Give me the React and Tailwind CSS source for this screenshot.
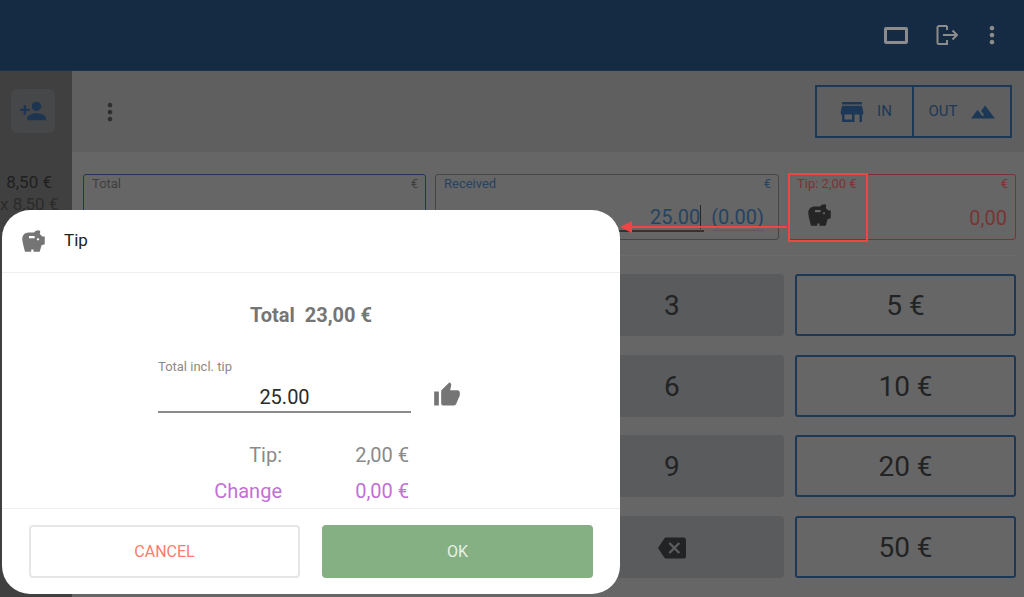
import React from 'react';
import { MdStore, MdTerrain, MdPersonAdd, MdMoreVert, MdSavings, MdThumbUp, MdBackspace } from 'react-icons/md';

const keys = [
  ['1', '2', '3', '5 €'],
  ['4', '5', '6', '10 €'],
  ['7', '8', '9', '20 €'],
  ['0', '.', 'back', '50 €'],
];

function Field({ label, className = '', labelClass = '', children }) {
  return (
    <div className={`relative h-[66px] rounded-[3px] border ${className}`}>
      <div className={`flex justify-between pl-2 pr-[7px] pt-[1px] text-[13px] leading-4 ${labelClass}`}>
        <span>{label}</span>
        <span>€</span>
      </div>
      {children}
    </div>
  );
}

function KeyRow({ row }) {
  return (
    <div className="flex h-[62px] gap-[11px]">
      <div className="grid flex-1 grid-cols-3 gap-[14px]">
        {row.slice(0, 3).map((k) => (
          <div key={k} className="flex items-center justify-center rounded-[4px] bg-[#5a5b5d] pt-[2px] text-[28px] text-[#222324]">
            {k === 'back' ? <MdBackspace size={28} /> : k}
          </div>
        ))}
      </div>
      <div className="flex w-[221px] items-center justify-center rounded-[3px] border-2 border-[#1d3856] pt-[2px] text-[28px] text-[#222324]">
        {row[3]}
      </div>
    </div>
  );
}

function TipDialog() {
  return (
    <div className="absolute left-[2px] top-[210px] flex h-[384px] w-[618px] flex-col rounded-[28px] bg-white">
      <div className="flex h-[63px] items-center gap-[17px] border-b border-[#efefef] pl-[18px]">
        <MdSavings size={27} className="text-[#757575]" />
        <span className="text-[17px] text-[#212121]">Tip</span>
      </div>
      <div className="flex-1">
        <div className="mt-[30px] text-center text-xl leading-6 font-bold text-[#757575]">Total&nbsp; 23,00 €</div>
        <div className="mt-[32px] flex items-end pl-[156px]">
          <div className="w-[253px] border-b-2 border-[#8a8a8a]">
            <div className="text-[13px] leading-4 text-[#8a8a8a]">Total incl. tip</div>
            <div className="mt-[7px] h-[29px] text-center text-xl leading-[30px] text-[#2b2b2b]">25.00</div>
          </div>
          <MdThumbUp size={28} className="mb-[4px] ml-[22px] text-[#757575]" />
        </div>
        <div className="mt-[28px] flex pl-[156px] text-xl leading-7 text-[#8a8a8a]">
          <span className="w-[124px] text-right">Tip:</span>
          <span className="w-[127px] text-right">2,00 €</span>
        </div>
        <div className="mt-[8px] flex pl-[156px] text-xl leading-7 text-[#c36fd6]">
          <span className="w-[124px] text-right">Change</span>
          <span className="w-[127px] text-right">0,00 €</span>
        </div>
      </div>
      <div className="flex h-[86px] gap-[22px] border-t border-[#efefef] px-[27px] pt-[16px]">
        <button className="h-[53px] w-[271px] rounded-[4px] border-2 border-[#e6e6e6] bg-white text-base text-[#ff7b6b]">CANCEL</button>
        <button className="h-[53px] w-[271px] rounded-[4px] bg-[#85b084] text-base text-[#e8f0e6]">OK</button>
      </div>
    </div>
  );
}

export default function App() {
  return (
    <div className="relative flex h-[597px] w-[1024px] flex-col overflow-hidden bg-[#666666] font-['Roboto',sans-serif]">
      <header className="flex h-[71px] shrink-0 items-center justify-end border-b border-[#1a3350] bg-[#152a43] pr-[20px] text-[#8c8c8c]">
        <div className="mr-[27px] h-[17px] w-[24px] rounded-[2px] border-[3px] border-[#8c8c8c]" />
        <svg width="24" height="24" viewBox="0 0 24 24" fill="none" stroke="currentColor" strokeWidth="2" className="mr-[19px]">
          <path d="M12 3H4a1.500 1.500 0 0 0-1.500 1.500v15A1.500 1.500 0 0 0 4 21h8v-4" />
          <path d="M12 3v4M8 12h14M17.500 7.500 22 12l-4.500 4.500" />
        </svg>
        <MdMoreVert size={28} className="-mr-[2px]" />
      </header>
      <div className="flex flex-1">
        <aside className="w-[72px] shrink-0 overflow-hidden bg-[#404040]">
          <div className="ml-[11px] mt-[18px] flex h-[44px] w-[44px] items-center justify-center rounded-[6px] bg-[#454749] text-[#1d3550]">
            <MdPersonAdd size={28} />
          </div>
          <div className="mt-[39px] whitespace-nowrap pr-[20px] text-right text-[17px] leading-5 text-[#1f1f1f]">8,50 €</div>
          <div className="mt-[2px] whitespace-nowrap pr-[20px] text-right text-[17px] leading-5 text-[#2b2b2b]">x 8,50 €</div>
        </aside>
        <main className="min-w-0 flex-1">
          <div className="flex h-[81px] items-center justify-between bg-[#5f5f5f] pl-[24px] pr-[12px]">
            <MdMoreVert size={28} className="text-[#2e2e2e]" />
            <div className="flex h-[53px] items-stretch text-[15px] text-[#1d3856]">
              <div className="flex w-[99px] items-center justify-center gap-[10px] border-2 border-[#1d3856]">
                <MdStore size={30} />
                <span>IN</span>
              </div>
              <div className="flex w-[98px] items-center justify-center gap-[12px] border-2 border-l-0 border-[#1d3856]">
                <span>OUT</span>
                <MdTerrain size={26} />
              </div>
            </div>
          </div>
          <div className="ml-[11px] mr-[8px] flex gap-[9px] border-b border-[#6b6b6b] pb-[15px] pt-[22px]">
            <Field label="Total" className="w-[343px] border-[#1d3856]" labelClass="text-[#3f3f3f]" />
            <Field label="Received" className="w-[344px] border-[#454545]" labelClass="text-[#254362]">
              <div className="absolute bottom-[10px] right-[14px] flex text-xl leading-6 text-[#254362]">
                <span className="border-r border-[#22272e]">25.00</span>
                <span className="ml-[10px]">(0.00)</span>
              </div>
              <div className="absolute bottom-[7px] left-[150px] h-[2px] w-[118px] bg-[#333333]" />
              <div className="absolute bottom-[8px] right-[14px] h-[1px] w-[51px] bg-[#5a5a5a]" />
            </Field>
            <Field label="Tip: 2,00 €" className="w-[228px] border-[#7a3434]" labelClass="text-[#7a3434]">
              <MdSavings size={27} className="absolute left-[17px] top-[27px] text-[#252525]" />
              <div className="absolute bottom-[9px] right-[8px] text-xl leading-6 text-[#7a3434]">0,00</div>
            </Field>
          </div>
          <div className="ml-[11px] mr-[8px] mt-[18px] flex flex-col gap-[18.500px]">
            {keys.map((row) => (
              <KeyRow key={row[3]} row={row} />
            ))}
          </div>
        </main>
      </div>

      {/* annotation over the tip field */}
      <div className="absolute left-[788px] top-[173px] h-[69px] w-[80px] border-2 border-[#f04545]" />
      <div className="absolute left-[630px] top-[226px] h-[2px] w-[157px] bg-[#f04545]" />
      <div className="absolute left-[620px] top-[221px] h-0 w-0 border-y-[6px] border-r-[12px] border-y-transparent border-r-[#f04545]" />

      <TipDialog />
    </div>
  );
}
